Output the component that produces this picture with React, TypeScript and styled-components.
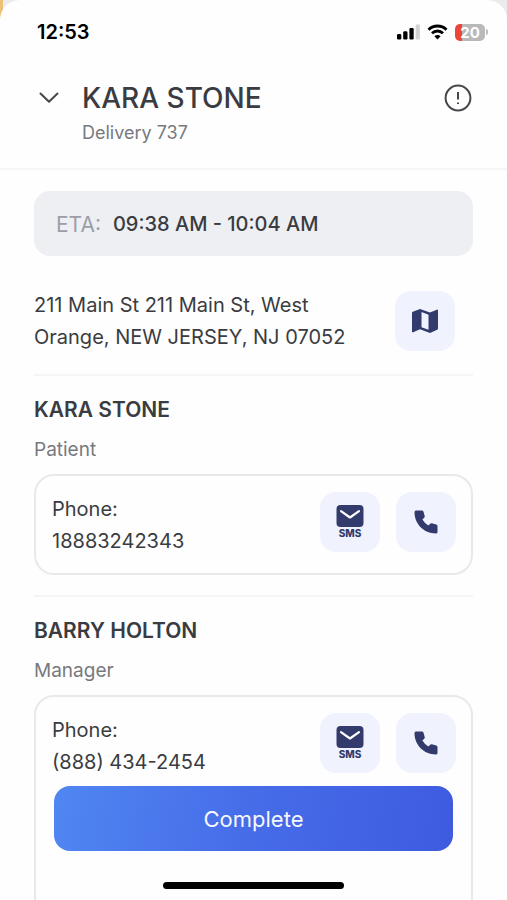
import React from "react";
import styled, { createGlobalStyle } from "styled-components";

const GlobalStyle = createGlobalStyle`
  *, *::before, *::after { box-sizing: border-box; }
  html, body, #root { margin: 0; height: 100%; }
  body {
    background: linear-gradient(90deg, #ecc178 0 3px, #ebebeb 3px);
    color: #3a3c41;
    font-family: Inter, "Open Sans", sans-serif;
    overflow: hidden;
  }
  h1, h2, p { margin: 0; }
  button { font: inherit; border: 0; padding: 0; cursor: pointer; }
`;

const Screen = styled.div`
  position: relative;
  display: flex;
  flex-direction: column;
  height: 100vh;
  overflow: hidden;
  background: #fefefe;
  border-radius: 20px 20px 0 0;
`;

const StatusBar = styled.div`
  display: flex;
  flex: none;
  align-items: center;
  justify-content: space-between;
  height: 64px;
  padding: 0 19px 0 37px;
`;

const Clock = styled.time`
  color: #000;
  font-size: 20px;
  font-weight: 600;
`;

const StatusIcons = styled.div`
  display: flex;
  align-items: center;
  gap: 7px;
`;

const Battery = styled.div`
  display: flex;
  align-items: center;
  gap: 1px;
`;

const BatteryBody = styled.span`
  display: flex;
  align-items: center;
  justify-content: center;
  width: 30px;
  height: 17px;
  border-radius: 5px;
  background: linear-gradient(90deg, #ec4436 0 7px, #b9b9b9 7px);
  color: #fff;
  font-size: 15px;
  font-weight: 700;
  line-height: 17px;
`;

const BatteryTip = styled.span`
  width: 2px;
  height: 6px;
  border-radius: 0 2px 2px 0;
  background: #bdbdbd;
`;

const Header = styled.header`
  display: flex;
  flex: none;
  align-items: flex-start;
  height: 106px;
  padding: 16px 34px 0;
  border-bottom: 2px solid #f5f5f6;
`;

const PlainButton = styled.button`
  display: flex;
  align-items: center;
  justify-content: center;
  width: 30px;
  height: 36px;
  background: none;
  color: #45474b;
`;

const Heading = styled.div`
  flex: 1;
  padding-left: 18px;
`;

const Title = styled.h1`
  font-size: 28px;
  font-weight: 500;
  line-height: 36px;
`;

const Caption = styled.p`
  color: #77797f;
  font-size: 18px;
  line-height: 34px;
`;

const Content = styled.main`
  flex: 1;
  min-height: 0;
  overflow: hidden;
  padding: 21px 34px 0;
`;

const EtaBar = styled.div`
  display: flex;
  align-items: center;
  gap: 12px;
  height: 65px;
  padding: 1px 22px 0;
  border-radius: 16px;
  background: #eeeff3;
  font-size: 21px;
`;

const EtaLabel = styled.span`
  color: #9b9ea7;
`;

const EtaValue = styled.span`
  font-size: 20px;
  font-weight: 500;
`;

const AddressRow = styled.section`
  display: flex;
  align-items: center;
  justify-content: space-between;
  padding: 33px 18px 21px 0;
`;

const BodyText = styled.p`
  font-size: 20px;
  line-height: 32px;
`;

const TileButton = styled.button`
  display: flex;
  flex: none;
  flex-direction: column;
  align-items: center;
  justify-content: center;
  width: 60px;
  height: 60px;
  border-radius: 16px;
  background: #f0f2fe;
  color: #323b6c;
`;

const TileLabel = styled.span`
  font-size: 10px;
  font-weight: 800;
  line-height: 12px;
`;

const Contact = styled.section`
  padding: 17px 0 20px;
  border-top: 2px solid #f5f5f6;
`;

const ContactName = styled.h2`
  font-size: 21px;
  font-weight: 600;
  line-height: 34px;
`;

const Role = styled(Caption)`
  padding: 6px 0 7px;
  font-size: 19px;
`;

const PhoneCard = styled.div<{ $tall?: boolean }>`
  display: flex;
  align-items: flex-start;
  gap: 16px;
  min-height: ${({ $tall }) => ($tall ? "260px" : "100px")};
  padding: 16px 15px 16px 16px;
  border: 2px solid #e8e9ed;
  border-radius: 20px;
`;

const PhoneText = styled(BodyText)`
  flex: 1;
  padding-top: 1px;
`;

const Footer = styled.footer`
  position: absolute;
  inset: auto 0 0;
  display: flex;
  flex-direction: column;
  align-items: center;
  gap: 31px;
  padding: 0 54px 11px;
`;

const CompleteButton = styled.button`
  width: 100%;
  height: 65px;
  border-radius: 16px;
  background: linear-gradient(100deg, #5086f2, #466ce8 50%, #3e5be0);
  color: #f5f7ff;
  font-size: 22px;
`;

const HomeIndicator = styled.div`
  width: 181px;
  height: 7px;
  border-radius: 4px;
  background: #000;
`;

const SignalIcon = () => (
  <svg width="23" height="16" viewBox="0 0 23 16" aria-hidden="true">
    <rect x="0" y="10" width="4.3" height="5.5" rx="1.3" />
    <rect x="6.2" y="7.2" width="4.3" height="8.3" rx="1.3" />
    <rect x="12.4" y="4" width="4.3" height="11.5" rx="1.3" />
    <rect x="18.6" y="0.5" width="4.3" height="15" rx="1.3" fill="#d2d2d2" />
  </svg>
);

const WifiIcon = () => (
  <svg width="21" height="16" viewBox="0 0 21 16" fill="none" stroke="#000" strokeWidth="2.9" aria-hidden="true">
    <path d="M1.5 5.7C6.6.8 14.4.8 19.5 5.7" />
    <path d="M5 9.3c3.2-3 7.8-3 11 0" />
    <path d="M7.4 12.3c1.8-1.7 4.4-1.7 6.2 0l-3.1 3.2z" fill="#000" stroke="none" />
  </svg>
);

const ChevronIcon = () => (
  <svg width="20" height="12" viewBox="0 0 20 12" fill="none" stroke="currentColor" strokeWidth="2" aria-hidden="true">
    <path d="M1.5 1.5 10 9.8l8.5-8.3" strokeLinecap="round" strokeLinejoin="round" />
  </svg>
);

const AlertIcon = () => (
  <svg width="28" height="28" viewBox="0 0 28 28" fill="none" stroke="currentColor" strokeWidth="2" aria-hidden="true">
    <circle cx="14" cy="14" r="12.4" />
    <path d="M14 8v7.5M14 18.5V20" />
  </svg>
);

const MapIcon = () => (
  <svg width="28" height="26" viewBox="0 0 28 26" fill="currentColor" aria-hidden="true">
    <path
      fillRule="evenodd"
      d="M1 4.8Q1 4 1.8 3.7L9 1l10 3.5 6.8-2.8Q27 1.3 27 2.5v18.1q0 .8-.8 1.1L19 25 9 21.2l-6.8 3Q1 24.6 1 23.4zM10.5 4v15.2l7 2.6V6.7z"
    />
  </svg>
);

const MailIcon = () => (
  <svg width="28" height="22" viewBox="0 0 28 22" aria-hidden="true">
    <rect x="0.5" y="0" width="27" height="22" rx="4" fill="currentColor" />
    <path d="m5 6.2 9 6.3 9-6.3" fill="none" stroke="#fff" strokeWidth="2.2" strokeLinecap="round" strokeLinejoin="round" />
  </svg>
);

const PhoneIcon = () => (
  <svg width="24" height="24" viewBox="0 0 24 24" fill="currentColor" aria-hidden="true">
    <path d="M2 .5h5.8q1.4 0 1.7 1.3L10.7 6q.3 1-.5 1.8L8.400 9.600Q10.500 13.300 14.300 15.500l1.900-1.800q.7-.7 1.700-.4l4.300 1.100q1.300.3 1.300 1.700V22q0 1.500-1.600 1.500C9.800 23.500.5 14.200.5 2.100.5.500 2 .5 2 .5z" />
  </svg>
);

type Person = { name: string; role: string; phone: string; tall?: boolean };

const people: Person[] = [
  { name: "KARA STONE", role: "Patient", phone: "18883242343" },
  { name: "BARRY HOLTON", role: "Manager", phone: "(888) 434-2454", tall: true },
];

const ContactSection = ({ name, role, phone, tall }: Person) => (
  <Contact>
    <ContactName>{name}</ContactName>
    <Role>{role}</Role>
    <PhoneCard $tall={tall}>
      <PhoneText>
        Phone:
        <br />
        {phone}
      </PhoneText>
      <TileButton type="button" aria-label={`SMS ${name}`}>
        <MailIcon />
        <TileLabel>SMS</TileLabel>
      </TileButton>
      <TileButton type="button" aria-label={`Call ${name}`}>
        <PhoneIcon />
      </TileButton>
    </PhoneCard>
  </Contact>
);

export default function App() {
  return (
    <>
      <GlobalStyle />
      <Screen>
        <StatusBar>
          <Clock>12:53</Clock>
          <StatusIcons>
            <SignalIcon />
            <WifiIcon />
            <Battery>
              <BatteryBody>20</BatteryBody>
              <BatteryTip />
            </Battery>
          </StatusIcons>
        </StatusBar>
        <Header>
          <PlainButton type="button" aria-label="Collapse">
            <ChevronIcon />
          </PlainButton>
          <Heading>
            <Title>KARA STONE</Title>
            <Caption>Delivery 737</Caption>
          </Heading>
          <PlainButton type="button" aria-label="Delivery information">
            <AlertIcon />
          </PlainButton>
        </Header>
        <Content>
          <EtaBar>
            <EtaLabel>ETA:</EtaLabel>
            <EtaValue>09:38 AM - 10:04 AM</EtaValue>
          </EtaBar>
          <AddressRow>
            <BodyText>
              211 Main St 211 Main St, West
              <br />
              Orange, NEW JERSEY, NJ 07052
            </BodyText>
            <TileButton type="button" aria-label="Open map">
              <MapIcon />
            </TileButton>
          </AddressRow>
          {people.map((person) => (
            <ContactSection key={person.name} {...person} />
          ))}
        </Content>
        <Footer>
          <CompleteButton type="button">Complete</CompleteButton>
          <HomeIndicator />
        </Footer>
      </Screen>
    </>
  );
}
